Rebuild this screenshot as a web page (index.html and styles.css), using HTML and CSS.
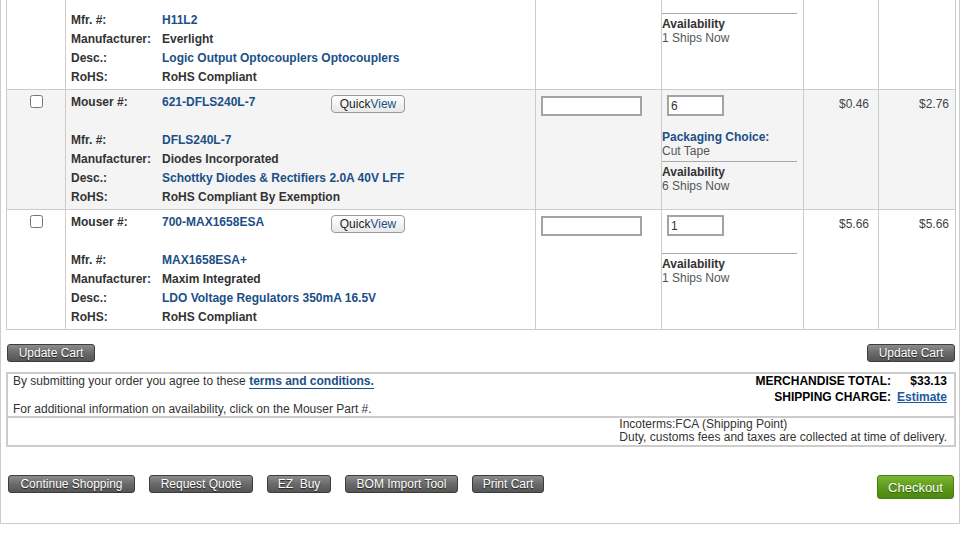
FILE: index.html
```html
<!DOCTYPE html>
<html lang="en">
<head>
    <meta charset="UTF-8">
    <title>Shopping Cart</title>
    <link rel="stylesheet" href="styles.css">
</head>
<body>
    <div class="cart-page">
        <div class="cart-table">
            <!-- row 1: only the lower part is in view -->
            <div class="cart-row partial">
                <div class="cell cell-check"></div>
                <div class="cell cell-part">
                    <div class="part-line"><span class="label">Mfr. #:</span><a href="#" class="value link">H11L2</a></div>
                    <div class="part-line"><span class="label">Manufacturer:</span><span class="value">Everlight</span></div>
                    <div class="part-line"><span class="label">Desc.:</span><a href="#" class="value link">Logic Output Optocouplers Optocouplers</a></div>
                    <div class="part-line"><span class="label">RoHS:</span><span class="value">RoHS Compliant</span></div>
                </div>
                <div class="cell cell-cust"></div>
                <div class="cell cell-qty">
                    <div class="avail-rule avail-rule-top"></div>
                    <div class="info-title">Availability</div>
                    <div class="info-text">1 Ships Now</div>
                </div>
                <div class="cell cell-price"></div>
                <div class="cell cell-ext"></div>
            </div>

            <div class="cart-row alt">
                <div class="cell cell-check"><input type="checkbox"></div>
                <div class="cell cell-part">
                    <div class="part-line part-line-top">
                        <span class="label">Mouser #:</span>
                        <a href="#" class="value value-num link">621-DFLS240L-7</a>
                        <button class="quickview">Quick<span>View</span></button>
                    </div>
                    <div class="part-line"><span class="label">Mfr. #:</span><a href="#" class="value link">DFLS240L-7</a></div>
                    <div class="part-line"><span class="label">Manufacturer:</span><span class="value">Diodes Incorporated</span></div>
                    <div class="part-line"><span class="label">Desc.:</span><a href="#" class="value link">Schottky Diodes &amp; Rectifiers 2.0A 40V LFF</a></div>
                    <div class="part-line"><span class="label">RoHS:</span><span class="value">RoHS Compliant By Exemption</span></div>
                </div>
                <div class="cell cell-cust"><input type="text" class="cust-input"></div>
                <div class="cell cell-qty">
                    <input type="text" class="qty-input" value="6">
                    <div class="packaging">
                        <div class="info-title link">Packaging Choice:</div>
                        <div class="info-text">Cut Tape</div>
                    </div>
                    <div class="avail-rule"></div>
                    <div class="info-title">Availability</div>
                    <div class="info-text">6 Ships Now</div>
                </div>
                <div class="cell cell-price">$0.46</div>
                <div class="cell cell-ext">$2.76</div>
            </div>

            <div class="cart-row">
                <div class="cell cell-check"><input type="checkbox"></div>
                <div class="cell cell-part">
                    <div class="part-line part-line-top">
                        <span class="label">Mouser #:</span>
                        <a href="#" class="value value-num link">700-MAX1658ESA</a>
                        <button class="quickview">Quick<span>View</span></button>
                    </div>
                    <div class="part-line"><span class="label">Mfr. #:</span><a href="#" class="value link">MAX1658ESA+</a></div>
                    <div class="part-line"><span class="label">Manufacturer:</span><span class="value">Maxim Integrated</span></div>
                    <div class="part-line"><span class="label">Desc.:</span><a href="#" class="value link">LDO Voltage Regulators 350mA 16.5V</a></div>
                    <div class="part-line"><span class="label">RoHS:</span><span class="value">RoHS Compliant</span></div>
                </div>
                <div class="cell cell-cust"><input type="text" class="cust-input"></div>
                <div class="cell cell-qty">
                    <input type="text" class="qty-input" value="1">
                    <div class="avail-rule avail-rule-gap"></div>
                    <div class="info-title">Availability</div>
                    <div class="info-text">1 Ships Now</div>
                </div>
                <div class="cell cell-price">$5.66</div>
                <div class="cell cell-ext">$5.66</div>
            </div>
        </div>

        <div class="update-bar">
            <button class="btn-dark btn-update">Update Cart</button>
            <button class="btn-dark btn-update">Update Cart</button>
        </div>

        <div class="summary">
            <div class="summary-top">
                <div class="summary-notes">
                    By submitting your order you agree to these <a href="#" class="terms">terms and conditions.</a><br>
                    <br>
                    For additional information on availability, click on the Mouser Part #.
                </div>
                <table class="totals">
                    <tr>
                        <td class="totals-label">MERCHANDISE TOTAL:</td>
                        <td class="totals-value">$33.13</td>
                    </tr>
                    <tr>
                        <td class="totals-label">SHIPPING CHARGE:</td>
                        <td class="totals-value"><a href="#" class="estimate">Estimate</a></td>
                    </tr>
                </table>
            </div>
            <div class="summary-bottom">
                <div class="incoterms">
                    Incoterms:FCA (Shipping Point)<br>
                    Duty, customs fees and taxes are collected at time of delivery.
                </div>
            </div>
        </div>

        <div class="action-bar">
            <div class="action-left">
                <button class="btn-dark btn-continue">Continue Shopping</button>
                <button class="btn-dark btn-quote">Request Quote</button>
                <button class="btn-dark btn-ezbuy">EZ&nbsp; Buy</button>
                <button class="btn-dark btn-bom">BOM Import Tool</button>
                <button class="btn-dark btn-print">Print Cart</button>
            </div>
            <button class="btn-checkout">Checkout</button>
        </div>
    </div>
</body>
</html>
```

FILE: styles.css
```css
/* Page */
body {
    margin: 0;
    padding: 0;
    font-family: "Liberation Sans", Arial, sans-serif;
    font-size: 12px;
    color: #333;
    background: #fff;
    overflow: hidden;
}

.cart-page {
    box-sizing: border-box;
    width: 960px;
    padding: 0 3px 24px 5px;
    border: 1px solid #ccc;
    border-top: none;
}

a {
    text-decoration: none;
}

.link {
    color: #1b4f87;
}

/* Cart table */
.cart-table {
    border: 1px solid #ccc;
    border-top: none;
}

.cart-row {
    display: grid;
    grid-template-columns: 59px 470px 126px 142px 75px 1fr;
    border-top: 1px solid #ccc;
    background: #fff;
}

.cart-row.partial {
    border-top: none;
}

.cart-row.alt {
    background: #f4f4f4;
}

.cell {
    box-sizing: border-box;
    border-right: 1px solid #ccc;
}

.cell:last-child {
    border-right: none;
}

.cell-check {
    text-align: center;
    padding-top: 2px;
}

.cell-check input {
    width: 13px;
    height: 13px;
    margin: 3px 0 0 0;
}

.cell-part {
    padding: 3px 0 2px 5px;
}

.partial .cell-part {
    padding-top: 11px;
}

.part-line {
    display: flex;
    height: 19px;
    line-height: 19px;
    font-weight: bold;
    white-space: nowrap;
}

.part-line-top {
    height: 38px;
}

.label {
    width: 91px;
    color: #333;
}

.value {
    color: #333;
}

.value.link {
    color: #1b4f87;
}

.value-num {
    width: 169px;
}

.quickview {
    box-sizing: border-box;
    width: 74px;
    height: 18px;
    margin-top: 2px;
    padding: 0;
    font-family: "Liberation Sans", Arial, sans-serif;
    font-size: 12px;
    line-height: 16px;
    color: #222;
    background: linear-gradient(#ffffff, #e8e8e8);
    border: 1px solid #9a9a9a;
    border-radius: 4px;
}

.quickview span {
    color: #1b4f87;
}

.cell-cust {
    padding: 6px 0 0 5px;
}

.cust-input {
    box-sizing: border-box;
    width: 101px;
    height: 20px;
    margin: 0;
    border: 2px solid #a3a3a3;
    background: #fff;
}

.cell-qty {
    padding-top: 5px;
}

.partial .cell-qty {
    padding-top: 13px;
}

.qty-input {
    display: block;
    box-sizing: border-box;
    width: 57px;
    height: 21px;
    margin: 0 0 0 5px;
    padding: 0 2px;
    border: 2px solid #a3a3a3;
    font-family: "Liberation Sans", Arial, sans-serif;
    font-size: 12px;
    color: #333;
    background: #fff;
}

.packaging {
    margin-top: 14px;
}

.avail-rule {
    width: 135px;
    margin-top: 3px;
    margin-bottom: 3px;
    border-top: 1px solid #aaa;
}

.avail-rule-gap {
    margin-top: 17px;
}

.avail-rule-top {
    margin-top: 0;
}

.info-title {
    font-weight: bold;
    line-height: 14px;
}

.info-title.link {
    color: #1b4f87;
}

.info-text {
    line-height: 14px;
    color: #555;
}

.cell-price,
.cell-ext {
    text-align: right;
    padding-top: 7px;
    line-height: 14px;
    color: #444;
}

.cell-price {
    padding-right: 9px;
}

.cell-ext {
    padding-right: 6px;
}

/* Buttons */
.btn-dark {
    box-sizing: border-box;
    height: 18px;
    padding: 0;
    font-family: "Liberation Sans", Arial, sans-serif;
    font-size: 12px;
    line-height: 16px;
    text-align: center;
    color: #fff;
    text-shadow: 0 1px 1px #222;
    background: linear-gradient(#8c8c8c, #6a6a6a 50%, #555 100%);
    border: 1px solid #3d3d3d;
    border-radius: 3px;
}

.btn-update {
    width: 88px;
}

.btn-continue {
    width: 127px;
}

.btn-quote {
    width: 104px;
}

.btn-ezbuy {
    width: 64px;
}

.btn-bom {
    width: 113px;
}

.btn-print {
    width: 72px;
}

.btn-checkout {
    box-sizing: border-box;
    width: 77px;
    height: 24px;
    padding: 0;
    font-family: "Liberation Sans", Arial, sans-serif;
    font-size: 13px;
    color: #fff;
    text-shadow: 0 1px 1px #2f5a08;
    background: linear-gradient(#7cb634, #5e9a1b 50%, #4d8710 100%);
    border: 1px solid #4a7d16;
    border-radius: 3px;
}

.update-bar {
    display: flex;
    justify-content: space-between;
    margin: 14px 1px 0 1px;
}

/* Summary box */
.summary {
    margin-top: 10px;
    border: 2px solid #ccc;
}

.summary-top {
    display: flex;
    justify-content: space-between;
    align-items: flex-start;
    height: 42px;
    padding: 0 7px 0 5px;
    border-bottom: 2px solid #ccc;
}

.summary-notes {
    line-height: 14px;
    color: #333;
}

.terms {
    font-weight: bold;
    color: #1b4f87;
    border-bottom: 1px solid #1b4f87;
}

.totals {
    border-collapse: collapse;
    margin-top: -1px;
}

.totals td {
    padding: 0;
    height: 16px;
    line-height: 16px;
    font-weight: bold;
    color: #000;
}

.totals td.totals-label {
    text-align: right;
    padding-right: 6px;
}

.totals-value {
    width: 50px;
    text-align: right;
}

.estimate {
    color: #1b5a9c;
    text-decoration: underline;
}

.summary-bottom {
    display: flex;
    justify-content: flex-end;
    height: 27px;
    padding-right: 7px;
}

.incoterms {
    line-height: 13px;
    color: #333;
}

/* Bottom actions */
.action-bar {
    display: flex;
    justify-content: space-between;
    align-items: flex-end;
    margin: 28px 2px 0 2px;
}

.action-left {
    display: flex;
    gap: 14px;
    margin-bottom: 6px;
}
```
